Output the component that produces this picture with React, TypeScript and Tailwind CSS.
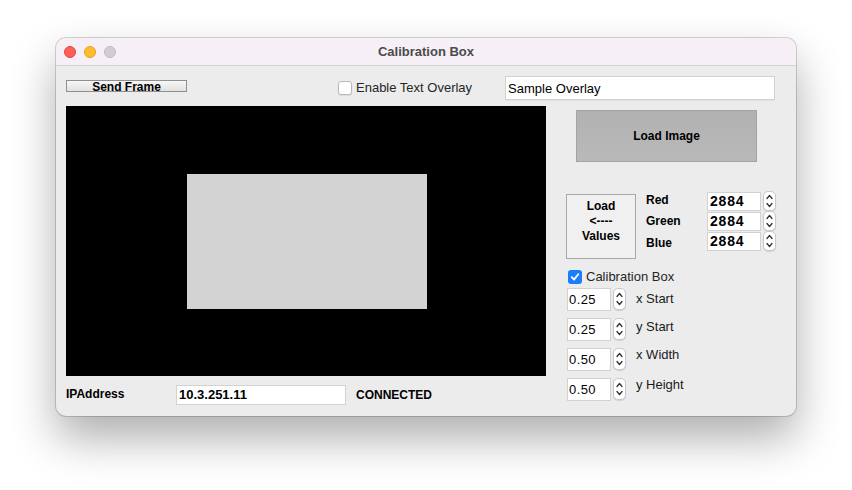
import React from "react";

const font = { fontFamily: '"Liberation Sans", Arial, sans-serif' };

function Spinner({ h }: { h: number }) {
  return (
    <div
      className="w-[13px] rounded-[5px] bg-white border border-[#c9c9c9] flex flex-col items-center justify-center shadow-[0_1px_1px_rgba(0,0,0,0.12)]"
      style={{ height: h }}
    >
      <svg width="9" height={h - 2} viewBox={`0 0 9 ${h - 2}`}>
        <path
          d={`M2 ${(h - 2) / 2 - 2.5} L4.5 ${(h - 2) / 2 - 5.5} L7 ${(h - 2) / 2 - 2.5}`}
          fill="none"
          stroke="#333"
          strokeWidth="1.3"
          strokeLinecap="round"
          strokeLinejoin="round"
        />
        <path
          d={`M2 ${(h - 2) / 2 + 2.5} L4.5 ${(h - 2) / 2 + 5.5} L7 ${(h - 2) / 2 + 2.5}`}
          fill="none"
          stroke="#333"
          strokeWidth="1.3"
          strokeLinecap="round"
          strokeLinejoin="round"
        />
      </svg>
    </div>
  );
}

function Checkbox({ checked }: { checked?: boolean }) {
  if (checked) {
    return (
      <div className="w-[14px] h-[14px] rounded-[3px] bg-[#1a7dfb] flex items-center justify-center">
        <svg width="10" height="10" viewBox="0 0 10 10">
          <path d="M1.8 5.2 L4 7.6 L8.3 2.2" fill="none" stroke="white" strokeWidth="1.8" strokeLinecap="round" strokeLinejoin="round" />
        </svg>
      </div>
    );
  }
  return <div className="w-[14px] h-[14px] rounded-[3px] bg-white border border-[#b9b9b9] shadow-[0_1px_1px_rgba(0,0,0,0.08)]" />;
}

export default function App() {
  const rgb = ["Red", "Green", "Blue"];
  const spins = [
    { v: "0.25", l: "x Start", mt: "mt-[3px]" },
    { v: "0.25", l: "y Start", mt: "mt-[1px]" },
    { v: "0.50", l: "x Width", mt: "-mt-px" },
    { v: "0.50", l: "y Height", mt: "-mt-px" },
  ];
  return (
    <div className="w-[852px] h-[490px] bg-white pl-[56px] pt-[38px] text-black" style={font}>
      <div className="w-[740px] h-[378px] rounded-[10px] overflow-hidden flex flex-col bg-[#ececec] shadow-[0_22px_45px_rgba(0,0,0,0.32),0_0_0_1px_rgba(0,0,0,0.16)]">
        {/* title bar */}
        <div className="h-[28px] shrink-0 bg-[#f6eff5] border-b border-[#d3d0d3] flex items-center relative">
          <div className="flex items-center gap-[8px] pl-[8px]">
            <div className="w-[12px] h-[12px] rounded-full bg-[#fe5f57] border border-[#e2463f]" />
            <div className="w-[12px] h-[12px] rounded-full bg-[#febc2e] border border-[#e1a116]" />
            <div className="w-[12px] h-[12px] rounded-full bg-[#d1cdd2] border border-[#bfbbc0]" />
          </div>
          <div className="absolute inset-0 flex items-center justify-center text-[13px] font-bold text-[#4b4b4b]">
            Calibration Box
          </div>
        </div>
        {/* body */}
        <div className="flex-1 pl-[10px] pt-[10px] flex flex-col">
          {/* top row */}
          <div className="flex items-start h-[25px]">
            <div className="mt-[4px] w-[121px] h-[12px] border border-[#8f8f8f] bg-gradient-to-b from-[#f7f7f7] to-[#e2e2e2] flex items-center justify-center text-[12px] font-bold leading-none">
              <span className="mt-[2px]">Send Frame</span>
            </div>
            <div className="ml-[151px] mt-[4px] flex items-center">
              <Checkbox />
              <span className="ml-[4px] mt-[1px] text-[13px] text-[#262626] leading-[14px]">Enable Text Overlay</span>
            </div>
            <div className="ml-[33px] w-[270px] h-[24px] bg-white border border-[#d2d2d2] shadow-[0_1px_0_rgba(0,0,0,0.05)] flex items-center pl-[2px] text-[13px] pt-[2px]">
              Sample Overlay
            </div>
          </div>
          {/* main */}
          <div className="flex mt-[5px]">
            <div className="w-[480px] flex flex-col">
              <div className="w-[480px] h-[270px] bg-black pl-[121px] pt-[68px]">
                <div className="w-[240px] h-[135px] bg-[#d3d3d3]" />
              </div>
              <div className="mt-[9px] flex items-center h-[20px]">
                <span className="w-[110px] text-[12px] font-bold -mt-[3px]">IPAddress</span>
                <div className="w-[170px] h-[20px] bg-white border border-[#d2d2d2] flex items-center pl-[2px] text-[13px] font-bold">
                  10.3.251.11
                </div>
                <span className="ml-[10px] text-[12px] font-bold -mt-px">CONNECTED</span>
              </div>
            </div>
            <div className="flex flex-col">
              <div className="ml-[30px] mt-[4px] w-[181px] h-[52px] border border-[#a3a3a3] bg-gradient-to-b from-[#b1b1b1] to-[#b9b9b9] flex items-center justify-center text-[12px] font-bold">
                Load Image
              </div>
              <div className="mt-[29px] flex items-start">
                <div className="ml-[20px] mt-[3px] w-[70px] h-[65px] border border-[#a8a8a8] bg-[#f0f0f0] flex flex-col items-center pt-[4px] text-[12px] font-bold leading-[15px]">
                  <span>Load</span>
                  <span>&lt;----</span>
                  <span>Values</span>
                </div>
                <div className="ml-[10px] flex flex-col">
                  {rgb.map((c, i) => (
                    <div key={c} className="flex items-center h-[20px]">
                      <span className={`w-[61px] text-[12px] font-bold ${i === 2 ? "mt-[3px]" : i === 0 ? "-mt-[2px]" : ""}`}>{c}</span>
                      <div className="w-[54px] h-[19px] bg-white border border-[#d2d2d2] flex items-center pl-[2px] text-[14px] font-bold tracking-[0.8px]">
                        2884
                      </div>
                      <div className="ml-[2px]">
                        <Spinner h={20} />
                      </div>
                    </div>
                  ))}
                </div>
              </div>
              <div className="mt-[11px] ml-[22px] flex items-center h-[14px]">
                <Checkbox checked />
                <span className="ml-[4px] text-[13px] text-[#262626]">Calibration Box</span>
              </div>
              <div className="mt-[4px] ml-[21px] flex flex-col gap-[7px]">
                {spins.map((s) => (
                  <div key={s.l} className="flex items-start h-[23px]">
                    <div className="w-[44px] h-[23px] bg-white border border-[#d2d2d2] flex items-center pl-[1px] text-[13px] tracking-[0.4px]">
                      {s.v}
                    </div>
                    <div className="ml-[2px]">
                      <Spinner h={22} />
                    </div>
                    <span className={`ml-[10px] text-[13px] leading-[16px] text-[#1a1a1a] ${s.mt}`}>{s.l}</span>
                  </div>
                ))}
              </div>
            </div>
          </div>
        </div>
      </div>
    </div>
  );
}
